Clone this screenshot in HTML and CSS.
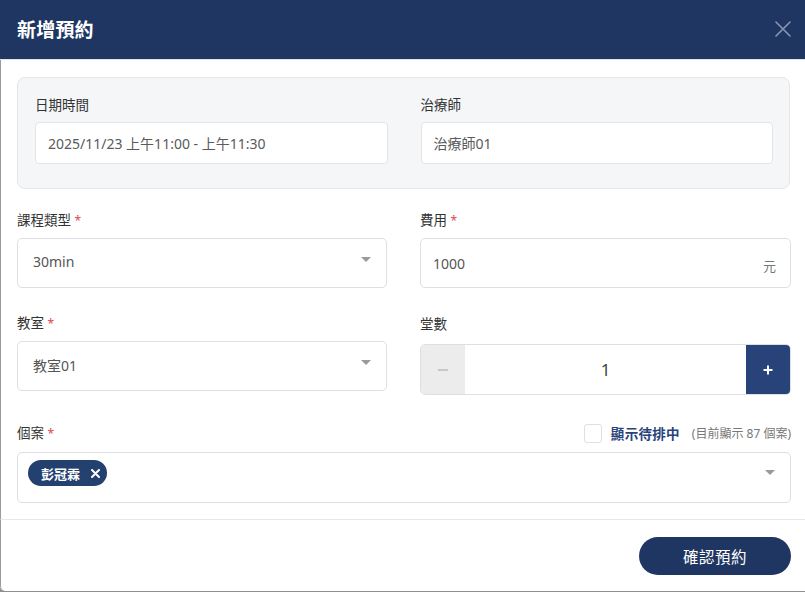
FILE: index.html
```html
<!DOCTYPE html>
<html lang="zh-Hant">
<head>
<meta charset="utf-8">
<title>新增預約</title>
<link rel="stylesheet" href="styles.css">
</head>
<body>
<div class="modal">
  <header class="modal-header">
    <h1 class="modal-title">新增預約</h1>
    <button class="close-btn" aria-label="close">
      <svg width="16" height="16" viewBox="0 0 16 16"><path d="M1 1L15 15M15 1L1 15" stroke="currentColor" stroke-width="1.6" fill="none" stroke-linecap="round"/></svg>
    </button>
  </header>
  <div class="modal-body">
    <section class="info-card">
      <div class="field">
        <label class="field-label">日期時間</label>
        <div class="readonly-input">2025/11/23 上午11:00 - 上午11:30</div>
      </div>
      <div class="field">
        <label class="field-label">治療師</label>
        <div class="readonly-input">治療師01</div>
      </div>
    </section>

    <div class="form-grid">
      <div class="field">
        <label class="field-label">課程類型 <span class="req">*</span></label>
        <div class="select">
          <span class="select-value">30min</span>
          <span class="caret"></span>
        </div>
      </div>
      <div class="field">
        <label class="field-label">費用 <span class="req">*</span></label>
        <div class="input input-suffix">
          <span class="input-value">1000</span>
          <span class="suffix">元</span>
        </div>
      </div>
      <div class="field">
        <label class="field-label">教室 <span class="req">*</span></label>
        <div class="select">
          <span class="select-value select-value-low">教室01</span>
          <span class="caret"></span>
        </div>
      </div>
      <div class="field">
        <label class="field-label field-label-low">堂數</label>
        <div class="stepper">
          <button class="step step-minus"><span class="minus-bar"></span></button>
          <div class="step-value">1</div>
          <button class="step step-plus">
            <svg width="10" height="10" viewBox="0 0 10 10"><path d="M5 0.5V9.5M0.5 5H9.5" stroke="#fff" stroke-width="2"/></svg>
          </button>
        </div>
      </div>
    </div>

    <div class="case-field">
      <div class="case-head">
        <label class="field-label">個案 <span class="req">*</span></label>
        <div class="pending">
          <span class="checkbox"></span>
          <span class="pending-text">顯示待排中</span>
          <span class="pending-count">(目前顯示 87 個案)</span>
        </div>
      </div>
      <div class="multi-select">
        <span class="tag">彭冠霖
          <svg class="tag-x" width="9" height="9" viewBox="0 0 9 9"><path d="M1 1L8 8M8 1L1 8" stroke="#fff" stroke-width="2" stroke-linecap="round"/></svg>
        </span>
        <span class="caret caret-multi"></span>
      </div>
    </div>
  </div>
  <footer class="modal-footer">
    <button class="confirm-btn">確認預約</button>
  </footer>
</div>
</body>
</html>
```
FILE: styles.css
```css
* { box-sizing: border-box; }
html, body { margin: 0; padding: 0; }
body {
  width: 805px;
  height: 592px;
  background: #8f8f8f;
  font-family: "Noto Sans", "Noto Sans CJK TC", sans-serif;
  overflow: hidden;
}
.modal {
  width: 805px;
  height: 591px;
  background: #fff;
  border-bottom-left-radius: 5px;
  display: flex;
  flex-direction: column;
  overflow: hidden;
}
.modal-header {
  height: 60px;
  flex: none;
  background: #1f3663;
  border-bottom: 1px solid #dfe5ee;
  display: flex;
  align-items: center;
  justify-content: space-between;
  padding: 0 14px 0 17px;
}
.modal-title {
  margin: 0;
  color: #fff;
  font-size: 19px;
  font-weight: 700;
  line-height: 24px;
  letter-spacing: 0.2px;
}
.close-btn {
  background: none;
  border: 0;
  padding: 0;
  width: 16px;
  height: 16px;
  margin-top: -2px;
  color: #8896b3;
  display: flex;
}
.modal-body {
  flex: none;
  border-left: 1px solid #9b9b9b;
  padding: 17px 14px 16px 16px;
}
.info-card {
  margin-right: 1px;
  background: #f5f6f8;
  border: 1px solid #e4e6ea;
  border-radius: 8px;
  padding: 18px 16px 24px 17px;
  display: grid;
  grid-template-columns: 1fr 1fr;
  column-gap: 33px;
}
.field { display: flex; flex-direction: column; }
.field-label {
  font-size: 13.5px;
  line-height: 18px;
  color: #333;
  margin-bottom: 8px;
}
.field-label-low { margin-top: 1px; margin-bottom: 11px; }
.req { color: #e0474c; font-size: 12px; }
.readonly-input {
  height: 42px;
  background: #fff;
  border: 1px solid #e3e5e9;
  border-radius: 4px;
  padding: 0 12px;
  display: flex;
  align-items: center;
  font-size: 14px;
  color: #5a5a5a;
}
.form-grid {
  margin-top: 22px;
  display: grid;
  grid-template-columns: 370px 371px;
  column-gap: 33px;
  row-gap: 26px;
}
.select, .input {
  height: 50px;
  border: 1px solid #dcdfe4;
  border-radius: 5px;
  display: flex;
  align-items: center;
  justify-content: space-between;
  font-size: 14px;
  color: #555;
}
.select { padding: 0 15px 0 15px; }
.select-value { margin-top: -4px; }
.select-value-low { margin-top: -3px; }
.caret {
  width: 0;
  height: 0;
  border-left: 5px solid transparent;
  border-right: 5px solid transparent;
  border-top: 5px solid #9a9a9a;
  margin-top: -7px;
}
.input { padding: 0 14px 0 12px; }
.input-value { color: #555; }
.suffix { color: #777; font-size: 13px; margin-top: 4px; }
.stepper {
  height: 51px;
  display: flex;
  border: 1px solid #dcdfe4;
  border-radius: 5px;
  overflow: hidden;
}
.step {
  width: 44px;
  border: 0;
  padding: 0;
  display: flex;
  align-items: center;
  justify-content: center;
}
.step-minus { background: #ececec; }
.minus-bar { width: 10px; height: 2px; background: #c8c8c8; }
.step-plus { background: #27437a; }
.step-value {
  flex: 1;
  display: flex;
  align-items: center;
  justify-content: center;
  font-size: 17px;
  color: #444;
  background: #fff;
}
.case-field { margin-top: 28px; }
.case-head {
  height: 20px;
  margin-bottom: 9px;
  display: flex;
  align-items: center;
  justify-content: space-between;
}
.case-head .field-label { margin: 0; }
.pending { display: flex; align-items: center; }
.checkbox {
  width: 18px;
  height: 19px;
  border: 1px solid #dcdfe4;
  border-radius: 3px;
  background: #fff;
  margin-right: 9px;
}
.pending-text {
  font-size: 13.5px;
  font-weight: 700;
  color: #27437a;
  letter-spacing: 0.3px;
  margin-right: 12px;
}
.pending-count {
  font-size: 12px;
  color: #777;
}
.multi-select {
  height: 51px;
  border: 1px solid #dcdfe4;
  border-radius: 5px;
  padding: 0 15px 0 10px;
  display: flex;
  align-items: flex-start;
  justify-content: space-between;
}
.tag {
  margin-top: 7px;
  height: 26px;
  width: 79px;
  border-radius: 13px;
  background: #23406f;
  color: #fff;
  font-size: 13px;
  font-weight: 700;
  display: flex;
  align-items: center;
  padding-left: 13px;
}
.tag-x { margin-left: 11px; }
.caret-multi { margin-top: 17px; }
.modal-footer {
  flex: 1;
  border-top: 1px solid #e6e8ec;
  border-left: 1px solid #9b9b9b;
  border-bottom-left-radius: 5px;
  display: flex;
  justify-content: flex-end;
  align-items: flex-start;
  padding: 17px 14px 0 0;
}
.confirm-btn {
  width: 152px;
  height: 38px;
  border: 0;
  border-radius: 19px;
  background: #1f3663;
  color: #fff;
  font-family: inherit;
  font-size: 15.5px;
  letter-spacing: 0.5px;
}
```
